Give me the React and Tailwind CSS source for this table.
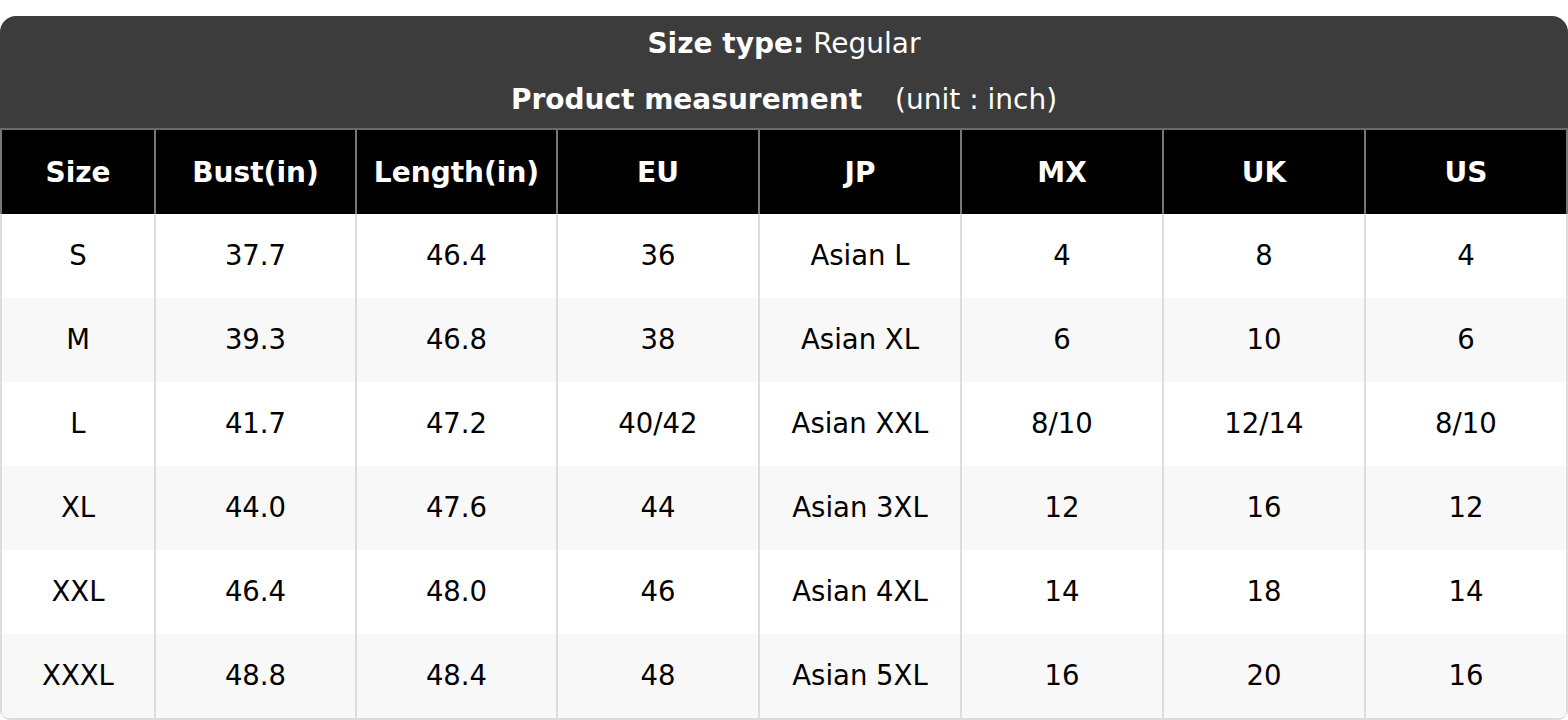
import React from "react";

const cols = ["Size", "Bust(in)", "Length(in)", "EU", "JP", "MX", "UK", "US"];
const rows = [
  ["S", "37.7", "46.4", "36", "Asian L", "4", "8", "4"],
  ["M", "39.3", "46.8", "38", "Asian XL", "6", "10", "6"],
  ["L", "41.7", "47.2", "40/42", "Asian XXL", "8/10", "12/14", "8/10"],
  ["XL", "44.0", "47.6", "44", "Asian 3XL", "12", "16", "12"],
  ["XXL", "46.4", "48.0", "46", "Asian 4XL", "14", "18", "14"],
  ["XXXL", "48.8", "48.4", "48", "Asian 5XL", "16", "20", "16"],
];

const grid = "grid grid-cols-[156px_201px_201px_202px_202px_202px_202px_1fr]";

export default function App() {
  return (
    <div className="bg-white w-[1568px] h-[720px] pt-4 font-['DejaVu_Sans',sans-serif]">
      <div className="rounded-t-[16px] rounded-b-[10px] overflow-hidden border-b-2 border-[#dcdcdc]">
        <div className="bg-[#3c3c3c] text-white text-[28px] border-b-2 border-[#6a6a6a]">
          <div className="h-[56px] flex items-center justify-center">
            <span className="font-bold">Size type:</span>
            <span className="ml-[9px]">Regular</span>
          </div>
          <div className="h-[56px] flex items-center justify-center">
            <span className="font-bold">Product measurement</span>
            <span className="ml-[33px]">(unit : inch)</span>
          </div>
        </div>
        <div className={`${grid} bg-black text-white font-bold text-[28px] h-[84px]`}>
          {cols.map((c, i) => (
            <div
              key={c}
              className={`flex items-center justify-center pt-[2px] border-r-2 border-[#777] ${i === 0 ? "border-l-2" : ""}`}
            >
              {c}
            </div>
          ))}
        </div>
        {rows.map((r, ri) => (
          <div
            key={ri}
            className={`${grid} h-[84px] text-[27.5px] text-black ${ri % 2 === 1 ? "bg-[#f8f8f8]" : "bg-white"}`}
          >
            {r.map((v, i) => (
              <div
                key={i}
                className={`flex items-center justify-center border-r-2 border-[#dcdcdc] ${i === 0 ? "border-l-2" : ""}`}
              >
                {v}
              </div>
            ))}
          </div>
        ))}
      </div>
    </div>
  );
}
